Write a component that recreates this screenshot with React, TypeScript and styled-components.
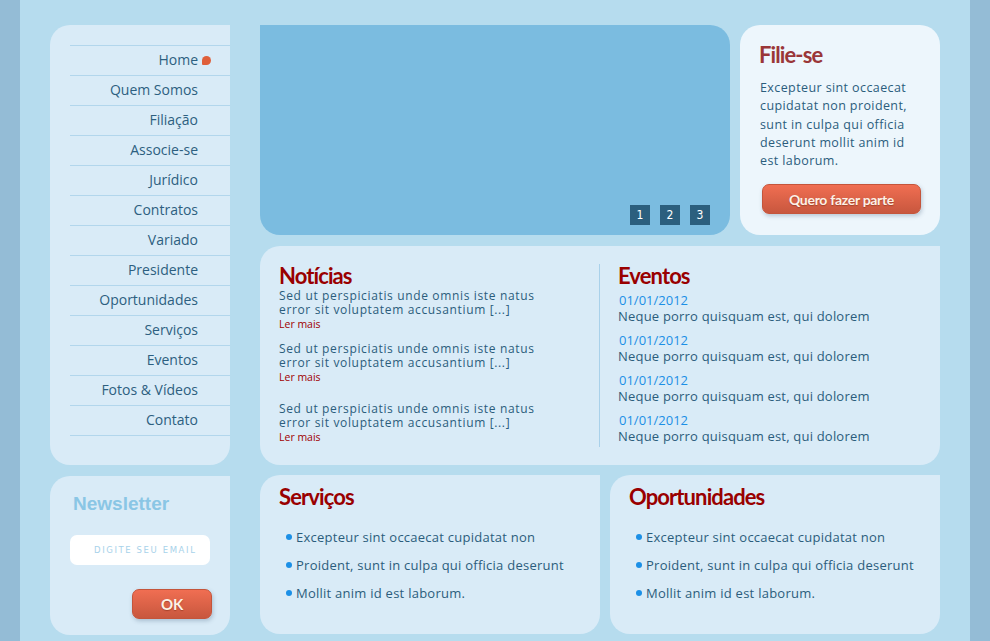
import React from "react";
import styled, { createGlobalStyle } from "styled-components";

const GlobalStyle = createGlobalStyle`
  html, body {
    margin: 0;
    padding: 0;
    background: #94bcd6;
  }
  body {
    font-family: "Open Sans", "Noto Sans", sans-serif;
  }
  ul {
    margin: 0;
    padding: 0;
    list-style: none;
  }
`;

const Page = styled.div`
  width: 950px;
  min-height: 641px;
  margin: 0 auto;
  box-sizing: border-box;
  padding: 25px 30px 0;
  background: #b6dcee;
  display: flex;
  gap: 30px;
`;

const Sidebar = styled.aside`
  width: 180px;
  display: flex;
  flex-direction: column;
  gap: 11px;
`;

const Main = styled.main`
  width: 680px;
  display: flex;
  flex-direction: column;
  gap: 11px;
`;

const Panel = styled.section`
  background: #d9ebf7;
  border-radius: 20px 0 20px 20px;
  box-sizing: border-box;
`;

const NavPanel = styled(Panel)`
  height: 440px;
  padding: 20px 0 30px 20px;
`;

const NavList = styled.ul`
  border-top: 1px solid #b2d6ec;
`;

const NavItem = styled.li`
  height: 30px;
  box-sizing: border-box;
  border-bottom: 1px solid #b2d6ec;
  display: flex;
  align-items: center;
  justify-content: flex-end;
  padding: 0 32px 2px 0;
`;

const NavLink = styled.a`
  position: relative;
  font-size: 14px;
  color: #2d5f80;
  text-decoration: none;
`;

const ActiveDot = styled.span`
  position: absolute;
  right: -13px;
  top: 6px;
  width: 9px;
  height: 9px;
  background: #df5f3a;
  border-radius: 50% 50% 50% 1px;
`;

const NewsletterPanel = styled(Panel)`
  height: 159px;
  padding: 17px 0 0 20px;
  display: flex;
  flex-direction: column;
`;

const NewsletterTitle = styled.h3`
  margin: 0 0 0 3px;
  font-family: "Liberation Sans", Arial, sans-serif;
  font-size: 19px;
  line-height: 22px;
  font-weight: 700;
  color: #8ac6e5;
`;

const EmailInput = styled.input`
  margin-top: 20px;
  width: 140px;
  height: 30px;
  box-sizing: border-box;
  border: none;
  border-radius: 7px;
  background: #fff;
  padding: 0 0 0 24px;
  font-family: "DejaVu Sans", sans-serif;
  font-size: 8.5px;
  letter-spacing: 1.6px;
  outline: none;
  &::placeholder {
    color: #a8d2ea;
  }
`;

const OrangeButton = styled.button<{ $w: number; $size: number }>`
  width: ${(p) => p.$w}px;
  height: 30px;
  border: 1px solid #c4553b;
  border-radius: 7px;
  background: linear-gradient(#f06e52, #c8573e);
  box-shadow: 1px 2px 4px rgba(60, 90, 120, 0.3);
  color: #fdf1e6;
  font-family: "Lato", "Open Sans", sans-serif;
  font-weight: 700;
  font-size: ${(p) => p.$size}px;
  letter-spacing: -0.3px;
  text-shadow: 0 1px 1px rgba(120, 40, 20, 0.5);
  cursor: pointer;
`;

const OkButton = styled(OrangeButton)`
  margin: 24px 18px 0 auto;
`;

const TopRow = styled.div`
  display: flex;
  gap: 10px;
  height: 210px;
`;

const Slider = styled.div`
  width: 470px;
  background: #7bbce0;
  border-radius: 0 20px 20px 20px;
  display: flex;
  align-items: flex-end;
  justify-content: flex-end;
  gap: 10px;
  padding: 0 20px 10px 0;
  box-sizing: border-box;
`;

const PageBox = styled.span`
  width: 20px;
  height: 20px;
  background: #2b5f7e;
  color: #fff;
  font-family: "DejaVu Sans Condensed", "DejaVu Sans", sans-serif;
  font-size: 12px;
  display: flex;
  align-items: center;
  justify-content: center;
`;

const JoinCard = styled.div`
  width: 200px;
  background: #edf6fc;
  border-radius: 20px;
  box-sizing: border-box;
  padding: 18px 0 0 19px;
`;

const Heading = styled.h2<{ $color?: string }>`
  margin: 0;
  font-family: "Lato", "Open Sans", sans-serif;
  font-weight: 700;
  font-size: 22px;
  line-height: 24px;
  letter-spacing: -0.9px;
  color: ${(p) => p.$color || "#990000"};
`;

const Text = styled.p`
  margin: 0;
  font-size: 13px;
  letter-spacing: 0.2px;
  color: #2b5d7c;
`;

const JoinText = styled(Text)`
  margin: 12px 0 0 1px;
  font-size: 12.5px;
  line-height: 18.3px;
  letter-spacing: 0.4px;
  width: 165px;
`;

const JoinButton = styled(OrangeButton)`
  margin: 14px 0 0 3px;
`;

const NewsPanel = styled(Panel)`
  height: 219px;
  padding: 18px 0 0 19px;
  display: grid;
  grid-template-columns: 321px 1fr;
`;

const NewsCol = styled.div`
  height: 183px;
  border-right: 1px solid #a9d1ea;
`;

const EventsCol = styled.div`
  padding-left: 18px;
`;

const NewsItem = styled.div<{ $space: number }>`
  margin-top: ${(p) => p.$space}px;
`;

const NewsText = styled(Text)`
  font-size: 12px;
  line-height: 14px;
  letter-spacing: 0.65px;
  white-space: nowrap;
`;

const ReadMore = styled.a`
  display: block;
  font-size: 10.5px;
  line-height: 14px;
  color: #a00000;
  text-decoration: none;
`;

const EventItem = styled.div<{ $space: number }>`
  margin-top: ${(p) => p.$space}px;
`;

const EventDate = styled.div`
  font-size: 13px;
  line-height: 16px;
  color: #1b8fe6;
  padding-left: 1px;
`;

const EventText = styled(Text)`
  line-height: 16px;
`;

const BottomRow = styled.div`
  display: flex;
  gap: 10px;
  margin-top: -1px;
`;

const InfoPanel = styled(Panel)<{ $w: number }>`
  width: ${(p) => p.$w}px;
  height: 159px;
  padding: 10px 0 0 19px;
`;

const BulletList = styled.ul`
  margin-top: 19px !important;
  display: flex;
  flex-direction: column;
  gap: 10px;
`;

const Bullet = styled.li`
  display: flex;
  align-items: center;
  gap: 4px;
  padding-left: 7px;
  font-size: 13px;
  line-height: 18px;
  color: #2b5d7c;
  letter-spacing: 0.25px;
  &::before {
    content: "";
    width: 6px;
    height: 6px;
    border-radius: 50%;
    background: #1b8fe6;
  }
`;

const navItems = [
  "Home",
  "Quem Somos",
  "Filiação",
  "Associe-se",
  "Jurídico",
  "Contratos",
  "Variado",
  "Presidente",
  "Oportunidades",
  "Serviços",
  "Eventos",
  "Fotos & Vídeos",
  "Contato",
];

const newsSpacing = [1, 11, 18];
const eventSpacing = [4, 8, 8, 8];
const bullets = [
  "Excepteur sint occaecat cupidatat non",
  "Proident, sunt in culpa qui officia deserunt",
  "Mollit anim id est laborum.",
];

const App: React.FC = () => {
  return (
    <>
      <GlobalStyle />
      <Page>
        <Sidebar>
          <NavPanel>
            <NavList>
              {navItems.map((item, i) => (
                <NavItem key={item}>
                  <NavLink href="#">
                    {item}
                    {i === 0 && <ActiveDot />}
                  </NavLink>
                </NavItem>
              ))}
            </NavList>
          </NavPanel>
          <NewsletterPanel>
            <NewsletterTitle>Newsletter</NewsletterTitle>
            <EmailInput placeholder="DIGITE SEU EMAIL" />
            <OkButton $w={80} $size={15}>
              OK
            </OkButton>
          </NewsletterPanel>
        </Sidebar>

        <Main>
          <TopRow>
            <Slider>
              <PageBox>1</PageBox>
              <PageBox>2</PageBox>
              <PageBox>3</PageBox>
            </Slider>
            <JoinCard>
              <Heading $color="#9a3638">Filie-se</Heading>
              <JoinText>
                Excepteur sint occaecat cupidatat non proident, sunt in culpa
                qui officia deserunt mollit anim id est laborum.
              </JoinText>
              <JoinButton $w={159} $size={14}>
                Quero fazer parte
              </JoinButton>
            </JoinCard>
          </TopRow>

          <NewsPanel>
            <NewsCol>
              <Heading>Notícias</Heading>
              {newsSpacing.map((space, i) => (
                <NewsItem key={i} $space={space}>
                  <NewsText>
                    Sed ut perspiciatis unde omnis iste natus
                    <br />
                    error sit voluptatem accusantium [...]
                  </NewsText>
                  <ReadMore href="#">Ler mais</ReadMore>
                </NewsItem>
              ))}
            </NewsCol>
            <EventsCol>
              <Heading>Eventos</Heading>
              {eventSpacing.map((space, i) => (
                <EventItem key={i} $space={space}>
                  <EventDate>01/01/2012</EventDate>
                  <EventText>Neque porro quisquam est, qui dolorem</EventText>
                </EventItem>
              ))}
            </EventsCol>
          </NewsPanel>

          <BottomRow>
            <InfoPanel $w={340}>
              <Heading>Serviços</Heading>
              <BulletList>
                {bullets.map((b) => (
                  <Bullet key={b}>{b}</Bullet>
                ))}
              </BulletList>
            </InfoPanel>
            <InfoPanel $w={330}>
              <Heading>Oportunidades</Heading>
              <BulletList>
                {bullets.map((b) => (
                  <Bullet key={b}>{b}</Bullet>
                ))}
              </BulletList>
            </InfoPanel>
          </BottomRow>
        </Main>
      </Page>
    </>
  );
};

export default App;
